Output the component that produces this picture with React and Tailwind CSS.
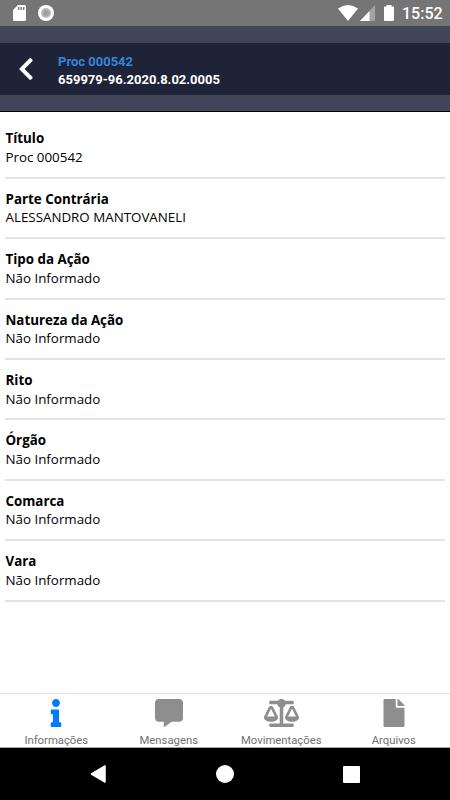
import React, { useState } from "react";
import {
  FaInfo,
  FaCommentAlt,
  FaBalanceScale,
  FaFile,
  FaChevronLeft,
} from "react-icons/fa";

const fields = [
  { label: "Título", value: "Proc 000542" },
  { label: "Parte Contrária", value: "ALESSANDRO MANTOVANELI" },
  { label: "Tipo da Ação", value: "Não Informado" },
  { label: "Natureza da Ação", value: "Não Informado" },
  { label: "Rito", value: "Não Informado" },
  { label: "Órgão", value: "Não Informado" },
  { label: "Comarca", value: "Não Informado" },
  { label: "Vara", value: "Não Informado" },
];

const tabs = [
  { name: "Informações", Icon: FaInfo, size: "w-7" },
  { name: "Mensagens", Icon: FaCommentAlt, size: "w-7" },
  { name: "Movimentações", Icon: FaBalanceScale, size: "w-[35px]" },
  { name: "Arquivos", Icon: FaFile, size: "w-7" },
];

function StatusBar() {
  return (
    <div className="flex h-[26px] shrink-0 items-center justify-between bg-[#757575] pl-[13px] pr-2 text-white">
      <div className="flex items-center gap-3">
        <svg width="13" height="16" viewBox="0 0 13 16">
          <path
            d="M5 0h6.5A1.5 1.5 0 0 1 13 1.500V14.500A1.500 1.500 0 0 1 11.500 16h-10A1.500 1.500 0 0 1 0 14.500V5z"
            fill="white"
          />
          <path d="M5.700 2v3M8.200 2v3M10.700 2v3" stroke="#757575" strokeWidth="1.400" />
        </svg>
        <svg width="16" height="16" viewBox="0 0 16 16">
          <circle cx="8" cy="8" r="8" fill="white" />
          <circle cx="8" cy="8" r="5" fill="#b9b9b9" />
          <circle cx="8" cy="8" r="3" fill="#a0a0a0" />
        </svg>
      </div>
      <div className="flex items-center">
        <svg width="20" height="16" viewBox="0 0 20 16">
          <path d="M0 3.500Q10-3.500 20 3.500L10 16z" fill="white" />
        </svg>
        <svg className="ml-0.5" width="15" height="16" viewBox="0 0 15 16">
          <path d="M15 0v16H0z" fill="#a3a3a3" />
          <path d="M9.500 6v10H0z" fill="white" />
        </svg>
        <svg className="ml-[9px]" width="10" height="16" viewBox="0 0 10 16">
          <path
            d="M2.500 0h5v1.500H9a1 1 0 0 1 1 1V15a1 1 0 0 1-1 1H1a1 1 0 0 1-1-1V2.500a1 1 0 0 1 1-1h1.500z"
            fill="white"
          />
        </svg>
        <span className="ml-2 w-[40px] whitespace-nowrap pt-[2px] font-['Roboto',sans-serif] text-[16px] font-medium leading-5">
          15:52
        </span>
      </div>
    </div>
  );
}

function Header() {
  return (
    <header className="h-[86px] shrink-0 border-b border-black bg-[#40455a] pt-[17px]">
      <div className="flex h-[52px] items-center bg-[#1e2337]">
        <button className="ml-[18px] w-4 text-white" aria-label="Voltar">
          <FaChevronLeft className="h-[26px] w-4" />
        </button>
        <div className="ml-6 pt-[3px] font-['Roboto',sans-serif] text-[13px] font-bold leading-[18px]">
          <p className="text-[#3286dc]">Proc 000542</p>
          <p className="text-white">659979-96.2020.8.02.0005</p>
        </div>
      </div>
    </header>
  );
}

function NavigationBar() {
  return (
    <div className="flex h-[52px] shrink-0 items-center justify-between bg-black px-[90px]">
      <svg width="16" height="18" viewBox="0 0 16 18">
        <path d="M15 1v16L1.500 9z" fill="white" stroke="white" strokeLinejoin="round" strokeWidth="1.500" />
      </svg>
      <span className="size-[18px] rounded-full bg-white" />
      <span className="size-[17px] rounded-[1px] bg-white" />
    </div>
  );
}

export default function App() {
  const [activeTab, setActiveTab] = useState("Informações");

  return (
    <div className="flex h-screen flex-col overflow-hidden bg-white">
      <StatusBar />
      <Header />
      <main className="flex-1 px-[5px] pt-[6.3px] font-['Open_Sans',sans-serif] text-[13.35px] text-black">
        {fields.map((field) => (
          <div
            key={field.label}
            className="h-[60.45px] border-b-2 border-[#e4e4e4] pl-[0.5px] pt-[11px] leading-[18.5px]"
          >
            <h2 className="font-bold">{field.label}</h2>
            <p>{field.value}</p>
          </div>
        ))}
      </main>
      <nav className="grid h-[55px] shrink-0 grid-cols-4 border-b border-t border-b-[#a5a5a5] border-t-[#e2e2e2] bg-white">
        {tabs.map(({ name, Icon, size }) => (
          <button
            key={name}
            onClick={() => setActiveTab(name)}
            className="flex flex-col items-center pt-[5px]"
          >
            <Icon
              className={`h-7 ${size} ${
                activeTab === name ? "text-[#007aff]" : "text-[#8e8e8e]"
              }`}
            />
            <span className="mt-[7px] font-['Roboto',sans-serif] text-[11.3px] leading-[13px] text-[#707070]">
              {name}
            </span>
          </button>
        ))}
      </nav>
      <NavigationBar />
    </div>
  );
}
